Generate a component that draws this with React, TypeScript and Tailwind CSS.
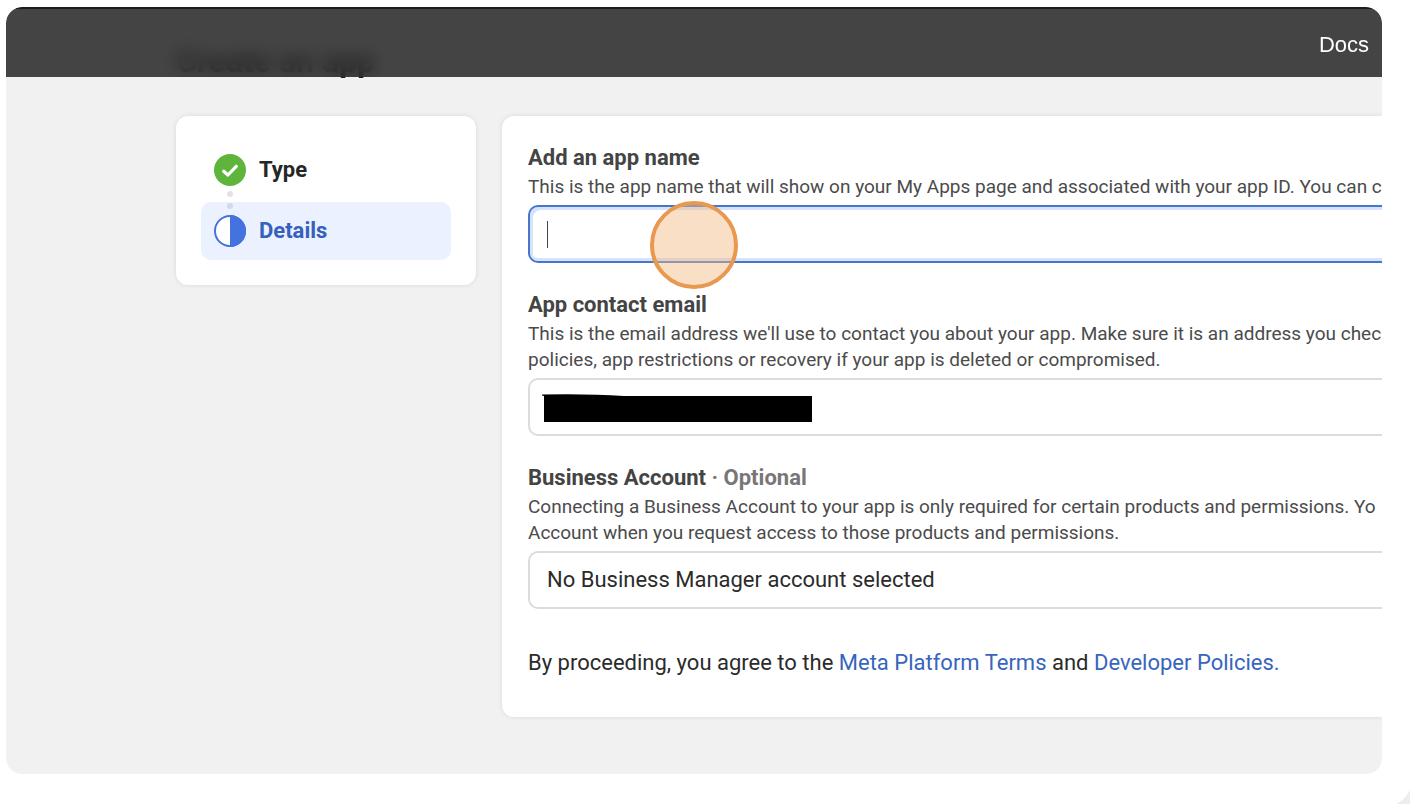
import type { ReactNode } from "react";

function CheckIcon() {
  return (
    <svg viewBox="0 0 32 32" className="size-8 shrink-0" aria-hidden="true">
      <circle cx="16" cy="16" r="16" fill="#5fb53c" />
      <path d="M9.7 17.2L13.9 21L22.3 12.3" fill="none" stroke="#fff" strokeWidth="3.2" strokeLinecap="round" strokeLinejoin="round" />
    </svg>
  );
}

function HalfIcon() {
  return (
    <svg viewBox="0 0 32 32" className="size-8 shrink-0" aria-hidden="true">
      <circle cx="16" cy="16" r="15" fill="#fff" stroke="#4472df" strokeWidth="2" />
      <path d="M16 0a16 16 0 0 1 0 32z" fill="#4472df" />
    </svg>
  );
}

type FieldProps = {
  id: string;
  label: ReactNode;
  lines: string[];
  children: ReactNode;
};

function Field({ id, label, lines, children }: FieldProps) {
  return (
    <div className="flex flex-col">
      <label htmlFor={id} className="text-[22px] leading-8 font-bold text-[#444]">
        {label}
      </label>
      <p className="mb-[5px] text-[19px] leading-[26px] whitespace-nowrap text-[#4b4b4b]">
        {lines.map((line) => (
          <span key={line} className="block">
            {line}
          </span>
        ))}
      </p>
      {children}
    </div>
  );
}

const inputBase =
  "h-[58px] w-full rounded-l-[10px] border-2 border-r-0 bg-white px-[17px] text-[22px] text-[#2b2b2b] outline-none";

export default function App() {
  return (
    <div className="relative flex min-h-screen flex-col overflow-hidden bg-white pt-[7px] pr-7 pb-[30px] pl-1.5 font-['Roboto',sans-serif]">
      <div className="flex flex-1 flex-col overflow-hidden rounded-2xl bg-[#f1f1f1]">
        <header className="relative z-10 flex h-[70px] shrink-0 items-center justify-end border-t-2 border-[#1c1c1c] bg-[#262626]/85 pr-[13px] backdrop-blur-sm">
          <a href="#docs" className="mt-1 font-['Liberation_Sans',sans-serif] text-[22px] leading-7 text-white">
            Docs
          </a>
        </header>
        <main className="pl-[170px]">
          <h1 className="-mt-[34px] mb-[37px] text-[32px] leading-9 font-bold text-[#1c1e21]">Create an app</h1>
          <div className="flex items-start gap-[26px]">
            <nav aria-label="Steps" className="w-[300px] shrink-0 rounded-xl bg-white px-[25px] pt-6 pb-[25px] shadow-[0_0_5px_rgba(0,0,0,0.1)]">
              <ol className="text-[22px] leading-8 font-bold">
                <li className="relative px-[13px] pt-3.5 pb-4">
                  <a href="#type" className="flex items-center gap-[13px] text-[#262626]">
                    <CheckIcon />
                    Type
                  </a>
                  <span className="absolute top-[51px] left-[26px] z-10 flex flex-col gap-1.5" aria-hidden="true">
                    <span className="size-1.5 rounded-full bg-[#e2e2e4]" />
                    <span className="size-1.5 rounded-full bg-[#d3daea]" />
                  </span>
                </li>
                <li className="rounded-[10px] bg-[#ebf1fe] px-[13px] py-[13px]">
                  <a href="#details" aria-current="step" className="flex items-center gap-[13px] text-[#3560bd]">
                    <HalfIcon />
                    Details
                  </a>
                </li>
              </ol>
            </nav>

            <form className="min-w-0 flex-1 rounded-l-xl bg-white shadow-[0_0_5px_rgba(0,0,0,0.1)]">
              <div className="flex flex-col gap-[26px] overflow-hidden pt-[26px] pb-[38px] pl-[26px]">
                <Field
                  id="app-name"
                  label="Add an app name"
                  lines={["This is the app name that will show on your My Apps page and associated with your app ID. You can c"]}
                >
                  <div className="relative">
                    <input
                      id="app-name"
                      type="text"
                      className={`${inputBase} border-[#4775cc] shadow-[inset_3px_3px_0_#d5e4fc,inset_0_-3px_0_#d5e4fc]`}
                    />
                    <span className="absolute top-4 left-[19px] h-[27px] w-px bg-[#444]" aria-hidden="true" />
                    <span
                      className="absolute -top-1 left-[122px] z-10 size-[88px] rounded-full border-4 border-[#e99850] bg-[#f2b980]/45"
                      aria-hidden="true"
                    />
                  </div>
                </Field>

                <Field
                  id="email"
                  label="App contact email"
                  lines={[
                    "This is the email address we'll use to contact you about your app. Make sure it is an address you chec",
                    "policies, app restrictions or recovery if your app is deleted or compromised.",
                  ]}
                >
                  <div className="relative">
                    <input id="email" type="email" className={`${inputBase} border-[#dcdcdc]`} />
                    <svg viewBox="0 0 270 28" className="absolute top-4 left-3.5 h-7 w-[270px]" aria-hidden="true">
                      <path d="M0 .5Q45 -.5 82 2H270V28H2V2L0 1.4z" fill="#000" />
                    </svg>
                  </div>
                </Field>

                <Field
                  id="business"
                  label={
                    <>
                      Business Account <span className="text-[#777]">· Optional</span>
                    </>
                  }
                  lines={[
                    "Connecting a Business Account to your app is only required for certain products and permissions. Yo",
                    "Account when you request access to those products and permissions.",
                  ]}
                >
                  <select id="business" className={`${inputBase} appearance-none border-[#dcdcdc] pb-0.5`}>
                    <option>No Business Manager account selected</option>
                  </select>
                </Field>

                <p className="mt-3 text-[22px] leading-8 whitespace-nowrap text-[#2b2b2b]">
                  By proceeding, you agree to the{" "}
                  <a href="#terms" className="text-[#3765bd]">
                    Meta Platform Terms
                  </a>{" "}
                  and{" "}
                  <a href="#policies" className="text-[#3765bd]">
                    Developer Policies.
                  </a>
                </p>
              </div>
            </form>
          </div>
        </main>
      </div>
      <svg viewBox="0 0 14 14" className="absolute right-0 bottom-0 size-3.5" aria-hidden="true">
        <path d="M0 14Q8 11 14 0V14z" fill="#eceeee" />
      </svg>
    </div>
  );
}
